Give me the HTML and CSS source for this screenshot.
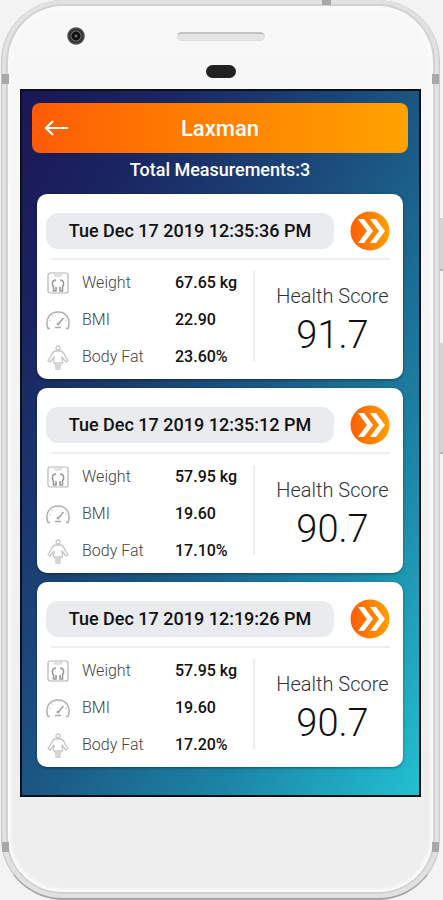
FILE: index.html
```
<!DOCTYPE html>
<html lang="en">
<head>
    <meta charset="UTF-8">
    <meta name="viewport" content="width=device-width, initial-scale=1.0">
    <title>Laxman - Measurements</title>
    <link rel="stylesheet" href="styles.css">
</head>
<body>
    <!-- shared icons -->
    <svg class="sprite" aria-hidden="true">
        <defs>
            <linearGradient id="orange" x1="0" y1="0" x2="1" y2="0">
                <stop offset="0" stop-color="#ff5d05"/>
                <stop offset="1" stop-color="#ffa000"/>
            </linearGradient>
        </defs>
        <symbol id="next" viewBox="0 0 40 40">
            <circle cx="20" cy="20" r="19.5" fill="url(#orange)"/>
            <path d="M8 8h6l9 12-9 12H8l9-12zM20 8h6l9 12-9 12h-6l9-12z" fill="#fff"/>
        </symbol>
        <symbol id="scale" viewBox="0 0 24 24">
            <rect x="2" y="2" width="20" height="20" rx="2" fill="none" stroke="#b4b4b4" stroke-width="1.2"/>
            <path d="M7 3h10l-2 3H9z" fill="#e2e2e2"/>
            <path d="M10 9C6 9 5.500 13 7.500 16v4h2.500v-4M14 9c4 0 4.500 4 2.500 7v4H14v-4" fill="none" stroke="#999" stroke-width="1.6"/>
        </symbol>
        <symbol id="gauge" viewBox="0 0 24 24">
            <path d="M4 20.500H2C-1.500 11 4 4 12 4s13.500 7 10 16.500h-2" fill="none" stroke="#b0b0b0" stroke-width="1.5"/>
            <path d="M3 12l2 1M6 7l1 2M12 4v2M21 12l-2 1" stroke="#ccc"/>
            <path d="M17.500 10l-5 6" stroke="#999" stroke-width="1.3"/>
            <circle cx="12" cy="16" r="1.5" fill="#aaa"/>
            <path d="M9 19.500h6" stroke="#aaa" stroke-width="1.5"/>
        </symbol>
        <symbol id="body" viewBox="0 0 24 26">
            <g fill="none" stroke="#c6c6c6" stroke-width="1.3" stroke-linejoin="round">
                <circle cx="12" cy="4" r="2"/>
                <path d="M9.500 7C7 7.500 6 9 5 12l-3 4.500 2 1.500L8 13c.5 2-1 3.500-.5 5.500L10 21v4h4v-4l2.500-2.500c.5-2-1-3.500-.5-5.500l4 5 2-1.500-3-4.500c-1-3-2-4.500-4.500-5z"/>
            </g>
            <path d="M8 18h8l-2 7h-4z" fill="#d6d6d6"/>
        </symbol>
    </svg>

    <div class="phone">
        <span class="band band-top"></span>
        <span class="band band-left"></span>
        <span class="band band-right"></span>
        <span class="band band-low-left"></span>
        <span class="band band-low-right"></span>
        <span class="side-key power"></span>
        <span class="side-key volume"></span>
        <div class="phone-top">
            <span class="camera"></span>
            <span class="speaker"></span>
            <span class="sensor"></span>
        </div>

        <main class="screen">
            <header class="title-bar">
                <button class="back" type="button" aria-label="Back">
                    <svg viewBox="0 0 24 18"><path d="M9 2L2 9l7 7M2 9h22"/></svg>
                </button>
                <h1>Laxman</h1>
            </header>
            <p class="total">Total Measurements:3</p>

            <div class="cards">
                <article class="card">
                    <div class="card-head">
                        <h2>Tue Dec 17 2019 12:35:36 PM</h2>
                        <button class="next" type="button" aria-label="Open measurement"><svg><use href="#next"/></svg></button>
                    </div>
                    <div class="card-body">
                        <dl class="metrics">
                            <div class="metric"><dt><svg><use href="#scale"/></svg>Weight</dt><dd>67.65 kg</dd></div>
                            <div class="metric"><dt><svg><use href="#gauge"/></svg>BMI</dt><dd>22.90</dd></div>
                            <div class="metric"><dt><svg><use href="#body"/></svg>Body Fat</dt><dd>23.60%</dd></div>
                        </dl>
                        <div class="score">
                            <p class="score-label">Health Score</p>
                            <p class="score-value">91.7</p>
                        </div>
                    </div>
                </article>

                <article class="card">
                    <div class="card-head">
                        <h2>Tue Dec 17 2019 12:35:12 PM</h2>
                        <button class="next" type="button" aria-label="Open measurement"><svg><use href="#next"/></svg></button>
                    </div>
                    <div class="card-body">
                        <dl class="metrics">
                            <div class="metric"><dt><svg><use href="#scale"/></svg>Weight</dt><dd>57.95 kg</dd></div>
                            <div class="metric"><dt><svg><use href="#gauge"/></svg>BMI</dt><dd>19.60</dd></div>
                            <div class="metric"><dt><svg><use href="#body"/></svg>Body Fat</dt><dd>17.10%</dd></div>
                        </dl>
                        <div class="score">
                            <p class="score-label">Health Score</p>
                            <p class="score-value">90.7</p>
                        </div>
                    </div>
                </article>

                <article class="card">
                    <div class="card-head">
                        <h2>Tue Dec 17 2019 12:19:26 PM</h2>
                        <button class="next" type="button" aria-label="Open measurement"><svg><use href="#next"/></svg></button>
                    </div>
                    <div class="card-body">
                        <dl class="metrics">
                            <div class="metric"><dt><svg><use href="#scale"/></svg>Weight</dt><dd>57.95 kg</dd></div>
                            <div class="metric"><dt><svg><use href="#gauge"/></svg>BMI</dt><dd>19.60</dd></div>
                            <div class="metric"><dt><svg><use href="#body"/></svg>Body Fat</dt><dd>17.20%</dd></div>
                        </dl>
                        <div class="score">
                            <p class="score-label">Health Score</p>
                            <p class="score-value">90.7</p>
                        </div>
                    </div>
                </article>
            </div>
        </main>
    </div>
</body>
</html>
```
FILE: styles.css
```
* {
    box-sizing: border-box;
}

body {
    margin: 0;
    background-color: #f3f3f3;
    font-family: Roboto, sans-serif;
    color: #111;
}

h1, h2, p, dl, dd {
    margin: 0;
}

button {
    padding: 0;
    border: 0;
    background: none;
    cursor: pointer;
}

svg {
    display: block;
}

.sprite {
    position: absolute;
    width: 0;
    height: 0;
}

/* phone shell */
.phone {
    position: relative;
    min-height: 100vh;
    margin: 0 3px 0 1px;
    padding: 5px 18px 98px;
    border: 1px solid #c8c8c8;
    border-top: 0;
    border-bottom: 2px solid #a5a5a5;
    border-radius: 62px;
    background: linear-gradient(#f8f8f8, #f6f6f6 20%, #eee 85%);
    box-shadow: inset 0 0 0 4px #e2e2e2, inset 0 0 0 6px #d2d2d2, inset 0 0 3px 9px #fbfbfb;
}

.band {
    position: absolute;
    width: 7px;
    height: 10px;
    background-color: #a8a8a8;
}

.band-top {
    top: 0;
    right: 108px;
    width: 9px;
    height: 5px;
}

.band-left {
    top: 74px;
    left: 0;
}

.band-right {
    top: 74px;
    right: 0;
}

.band-low-left {
    bottom: 46px;
    left: 0;
}

.band-low-right {
    bottom: 46px;
    right: 0;
}

.side-key {
    position: absolute;
    right: -4px;
    width: 3px;
    background-color: #d4d4d4;
    border-bottom: 2px solid #b5b5b5;
}

.power {
    top: 218px;
    height: 53px;
}

.volume {
    top: 343px;
    height: 111px;
}

.phone-top {
    display: grid;
    grid-template-columns: 1fr auto 1fr;
    grid-template-rows: 20px 14px;
    align-items: center;
    row-gap: 18px;
    height: 84px;
    padding: 21px 0 0 47px;
}

.phone-top .camera {
    width: 18px;
    height: 18px;
    border-radius: 50%;
    background: radial-gradient(circle, #667 0 1px, #111 2px 4px, #777 5px, #222 6px, #555 8px, #999 9px);
}

.phone-top .speaker {
    width: 88px;
    height: 9px;
    margin-left: -47px;
    border: 1px solid #ddd;
    border-top: 2px solid #c2c2c2;
    border-radius: 5px;
    background-color: #e4e4e4;
}

.phone-top .sensor {
    grid-area: 2 / 2;
    justify-self: center;
    width: 30px;
    height: 13px;
    margin-left: -47px;
    border-radius: 7px;
    background-color: #222;
}

/* app */
.screen {
    padding: 12px 11px 28px 10px;
    border: 2px solid #0a1013;
    background: linear-gradient(to bottom right, #1b1655, #1a2560 18%, #1b4577 40%, #1b5985 52%, #1c85a5 75%, #22c0d2);
}

.title-bar {
    display: grid;
    grid-template-columns: 48px 1fr 48px;
    align-items: center;
    height: 50px;
    border-radius: 8px;
    background: linear-gradient(90deg, #ff5b05, #ff7c00 40%, #ffa200);
}

.title-bar h1 {
    font-size: 22px;
    font-weight: 500;
    color: #fff;
    text-align: center;
}

.back svg {
    width: 24px;
    height: 18px;
    margin: 0 auto;
    fill: none;
    stroke: #fff;
    stroke-width: 2;
}

.total {
    padding: 4px 0 11px;
    font-size: 18px;
    font-weight: 500;
    line-height: 26px;
    color: #fff;
    text-align: center;
}

.cards {
    display: flex;
    flex-direction: column;
    gap: 9px;
    padding: 0 5px;
}

.card {
    padding: 17px 13px 4px 9px;
    border-radius: 10px;
    background-color: #fff;
    box-shadow: 0 1px 3px rgba(0, 0, 0, 0.4);
}

.card-head {
    display: flex;
    align-items: center;
    gap: 16px;
    margin-bottom: 7px;
}

.card-head h2 {
    flex: 1;
    border-radius: 12px;
    background-color: #e9ebee;
    font-size: 18px;
    font-weight: 500;
    line-height: 36px;
    text-align: center;
}

.next svg {
    width: 40px;
    height: 40px;
}

.card-body {
    display: flex;
    margin-left: 5px;
    padding-top: 4px;
    border-top: 2px solid #eee;
}

.metrics {
    flex: 1;
    margin-left: -5px;
}

.metric {
    display: flex;
    align-items: center;
    height: 37px;
    font-size: 16px;
}

.metric dt {
    display: flex;
    align-items: center;
    gap: 12px;
    width: 129px;
    font-weight: 300;
    color: #444;
}

.metric svg {
    width: 24px;
    height: 26px;
}

.metric dd {
    font-weight: 500;
}

.score {
    width: 137px;
    margin: 7px 0 14px;
    padding: 11px 0 0 20px;
    border-left: 2px solid #eee;
    text-align: center;
    white-space: nowrap;
    font-weight: 300;
}

.score-label {
    font-size: 20px;
    line-height: 28px;
    color: #333;
}

.score-value {
    font-size: 38px;
    line-height: 50px;
}
```
